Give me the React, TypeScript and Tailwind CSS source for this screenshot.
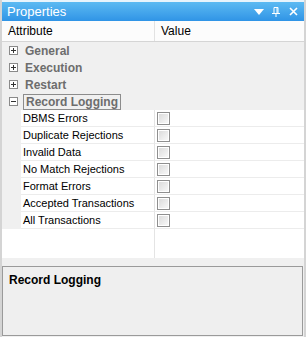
import React from "react";

const groups = ["General", "Execution", "Restart"];
const items = [
  "DBMS Errors",
  "Duplicate Rejections",
  "Invalid Data",
  "No Match Rejections",
  "Format Errors",
  "Accepted Transactions",
  "All Transactions",
];

function Expander({ open }: { open?: boolean }) {
  return (
    <svg width="9" height="9" viewBox="0 0 9 9" className="shrink-0">
      <rect x="0.5" y="0.5" width="8" height="8" fill="#fff" stroke="#8a8a8a" />
      <line x1="2" y1="4.5" x2="7" y2="4.5" stroke="#333" />
      {!open && <line x1="4.5" y1="2" x2="4.5" y2="7" stroke="#333" />}
    </svg>
  );
}

function Checkbox() {
  return (
    <div className="w-[13px] h-[13px] border border-[#8f8f8f] bg-white p-px">
      <div className="w-full h-full bg-gradient-to-br from-[#dcdcdc] to-[#f8f8f8]" />
    </div>
  );
}

export default function App() {
  return (
    <div
      className="w-[306px] h-[337px] bg-[#f0f0f0] flex flex-col border-x-[2px] border-[#d4d4d4] overflow-hidden"
      style={{ fontFamily: '"Liberation Sans", Arial, sans-serif' }}
    >
      {/* title */}
      <div className="h-[21px] flex items-center pl-[5px] pr-[6px] bg-gradient-to-b from-[#5cbaf2] to-[#2f94e6] text-white text-[13px] border-t-[2px] border-[#e8f4fc]">
        <span className="flex-1">Properties</span>
        <svg width="10" height="6" viewBox="0 0 10 6" className="mr-[8px]">
          <path d="M0 0H10L5 6Z" fill="#fff" />
        </svg>
        <svg width="8" height="10" viewBox="0 0 8 10" className="mr-[9px]">
          <path d="M2 0.5H6M2 0.5V6M6 0.5V6M5 1V6M0 6.5H8M4 7V10" stroke="#fff" fill="none" />
        </svg>
        <svg width="9" height="9" viewBox="0 0 9 9">
          <path d="M1 1L8 8M8 1L1 8" stroke="#fff" strokeWidth="1.6" />
        </svg>
      </div>

      {/* grid */}
      <div className="flex flex-col bg-white">
        <div className="h-[21px] flex items-center text-[12px] text-black bg-[#fcfcfc] border-b border-[#d5d5d5]">
          <div className="w-[153px] pl-[6px] border-r border-[#e2e2e2] h-full flex items-center">Attribute</div>
          <div className="pl-[6px]">Value</div>
        </div>
        {groups.map((g) => (
          <div key={g} className="h-[17px] flex items-center gap-[7px] pl-[7px] bg-[#f0f0f0] text-[12px] font-bold text-[#6d6d6d]">
            <Expander />
            <span>{g}</span>
          </div>
        ))}
        <div className="h-[17px] flex items-center gap-[5px] pl-[7px] bg-[#f0f0f0] text-[12px] font-bold text-[#6d6d6d]">
          <Expander open />
          <span className="border border-[#8c8c8c] px-[2px] leading-[14px]">Record Logging</span>
        </div>
        {items.map((it) => (
          <div key={it} className="h-[17px] flex bg-[#f0f0f0]">
            <div className="w-[19px]" />
            <div className="w-[134px] bg-white border-b border-[#ececec] border-r border-r-[#e4e4e4] flex items-center pl-[2px] text-[11px] text-black">
              {it}
            </div>
            <div className="flex-1 bg-white border-b border-[#ececec] flex items-center pl-[2px]">
              <Checkbox />
            </div>
          </div>
        ))}
        <div className="h-[29px] flex">
          <div className="w-[153px] border-r border-[#e4e4e4]" />
        </div>
      </div>

      {/* splitter */}
      <div className="h-[8px] bg-[#f0f0f0]" />

      {/* description */}
      <div className="flex-1 mb-[1px] mr-[1px] border border-[#9a9a9a] bg-[#efefef] px-[6px] pt-[4px]">
        <div className="text-[12px] font-bold text-black">Record Logging</div>
      </div>
    </div>
  );
}
